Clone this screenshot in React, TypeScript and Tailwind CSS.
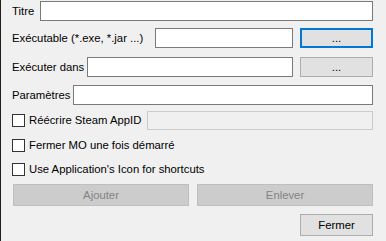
import React from 'react'

function TextBox({ className = '', disabled = false }: { className?: string; disabled?: boolean }) {
  return (
    <div
      className={`h-full border ${disabled ? 'border-[#cccccc] bg-[#f0f0f0]' : 'border-[#7a7a7a] bg-white'} ${className}`}
    />
  )
}

function Check({ label }: { label: string }) {
  return (
    <div className="flex items-center">
      <div className="w-[13px] h-[13px] border border-[#333333] bg-white shrink-0" />
      <span className="ml-[4px] whitespace-nowrap">{label}</span>
    </div>
  )
}

function Btn({ label, focus = false, disabled = false, className = '' }: { label: string; focus?: boolean; disabled?: boolean; className?: string }) {
  const look = disabled
    ? 'bg-[#cccccc] border border-[#bfbfbf] text-[#838383]'
    : focus
      ? 'bg-[#e1e1e1] border-2 border-[#0078d7] text-black'
      : 'bg-[#e1e1e1] border border-[#adadad] text-black'
  return (
    <div className={`flex items-center justify-center h-full ${look} ${className}`}>{label}</div>
  )
}

export default function App() {
  return (
    <div
      className="w-[386px] h-[241px] bg-[#f0f0f0] border-l border-[#1f1f1f] pl-[11px] pr-[13px] flex flex-col text-[11.3px] text-black overflow-hidden"
      style={{ fontFamily: '"Liberation Sans", Arial, sans-serif' }}
    >
      <div className="mt-[1px] h-[20px] flex items-center">
        <span className="w-[28px] shrink-0">Titre</span>
        <TextBox className="flex-1" />
      </div>

      <div className="mt-[7px] h-[20px] flex items-center">
        <span className="w-[143px] shrink-0 whitespace-nowrap">Exécutable (*.exe, *.jar ...)</span>
        <TextBox className="flex-1" />
        <Btn label="..." focus className="ml-[7px] w-[73px] h-[21px]" />
      </div>

      <div className="mt-[9px] h-[20px] flex items-center">
        <span className="w-[75px] shrink-0 whitespace-nowrap">Exécuter dans</span>
        <TextBox className="flex-1" />
        <Btn label="..." className="ml-[7px] w-[73px] h-[21px]" />
      </div>

      <div className="mt-[8px] h-[20px] flex items-center">
        <span className="w-[61px] shrink-0">Paramètres</span>
        <TextBox className="flex-1" />
      </div>

      <div className="mt-[6px] h-[19px] flex items-center">
        <div className="w-[135px] shrink-0">
          <Check label="Réécrire Steam AppID" />
        </div>
        <TextBox disabled className="flex-1" />
      </div>

      <div className="mt-[6px] h-[19px] flex items-center">
        <Check label="Fermer MO une fois démarré" />
      </div>

      <div className="mt-[5px] h-[19px] flex items-center">
        <Check label="Use Application's Icon for shortcuts" />
      </div>

      <div className="mt-[5px] h-[22px] flex gap-[8px] pl-[1px]">
        <Btn label="Ajouter" disabled className="flex-1" />
        <Btn label="Enlever" disabled className="flex-1" />
      </div>

      <div className="mt-[8px] h-[22px] flex justify-end">
        <Btn label="Fermer" className="w-[73px]" />
      </div>
    </div>
  )
}
